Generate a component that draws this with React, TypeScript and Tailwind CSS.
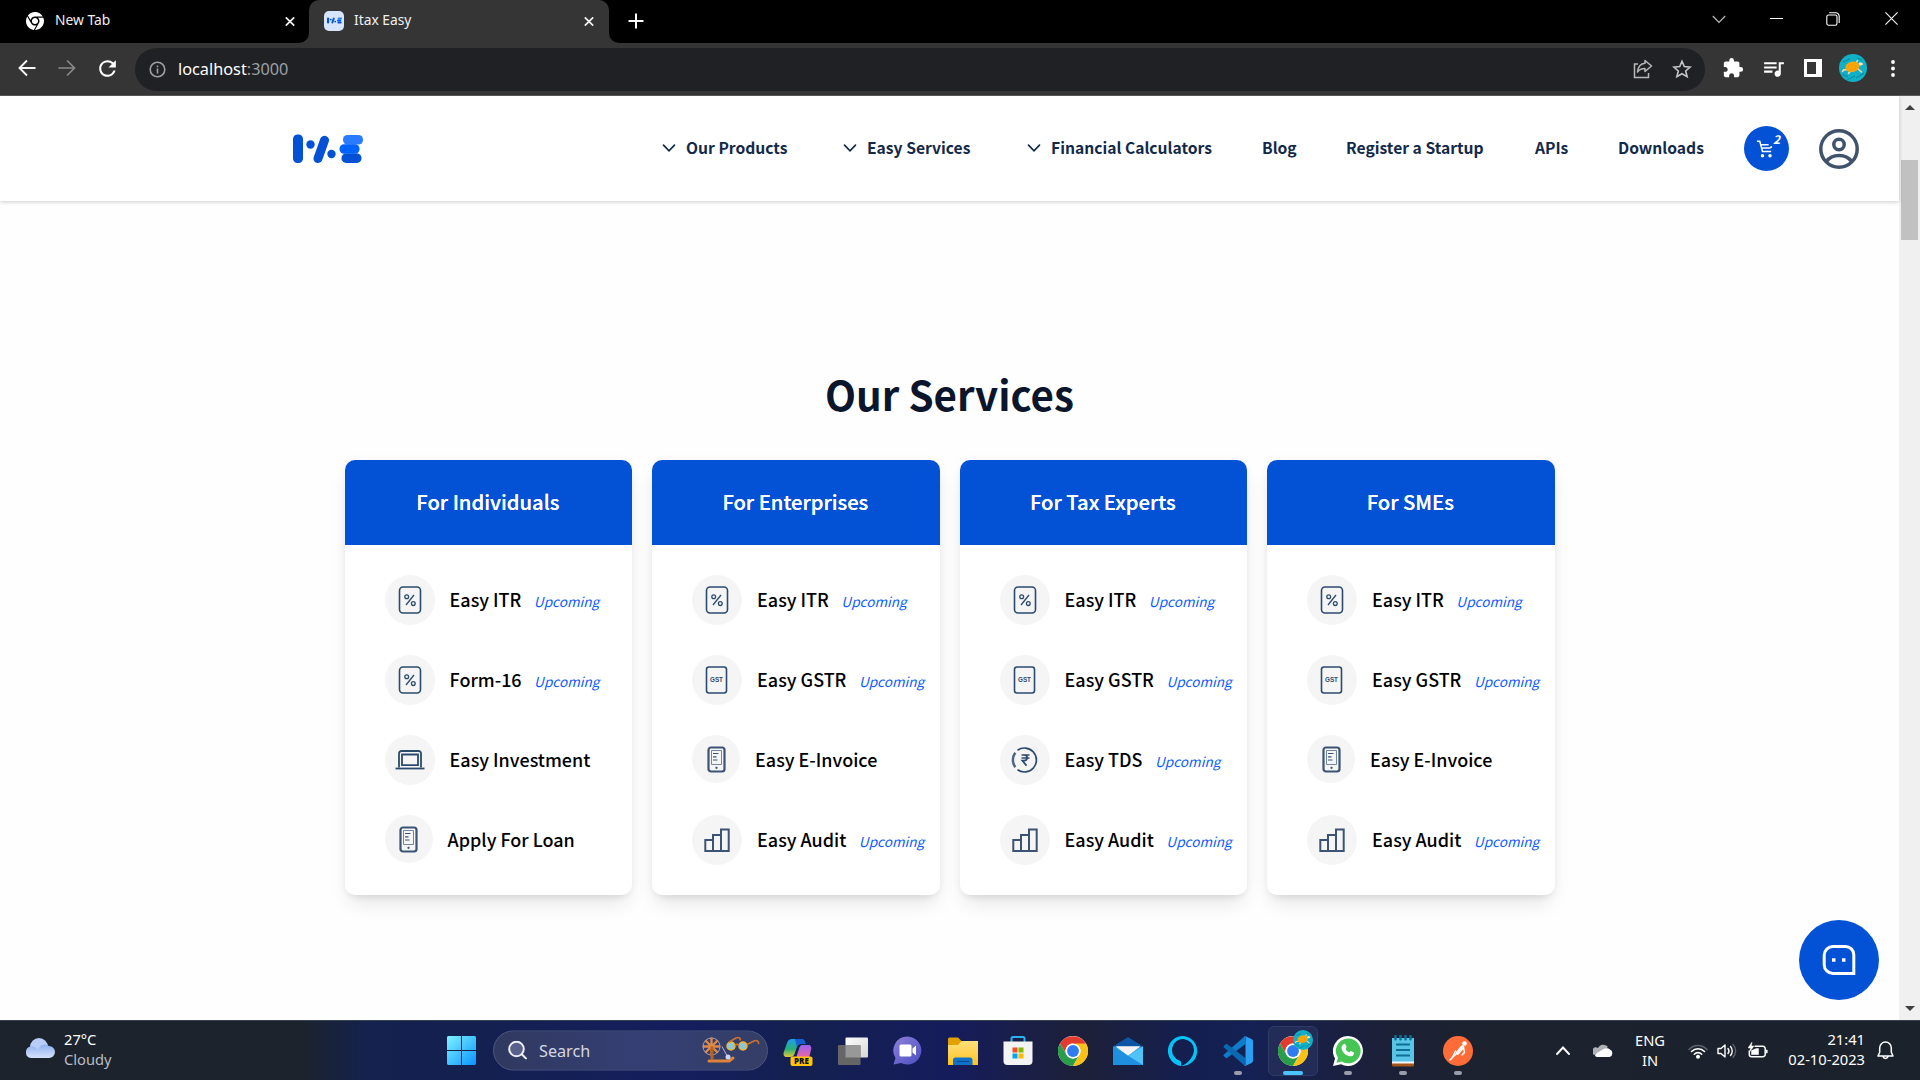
import type { ReactNode } from "react";
import { FaChrome } from "react-icons/fa6";
import { MdExtension, MdQueueMusic, MdRefresh } from "react-icons/md";

const SITE = "font-['Noto_Sans_CJK_JP','Noto_Sans_CJK_SC',sans-serif]";

function BrandMark({ className }: { className: string }) {
  return (
    <svg className={className} viewBox="0 0 70 30" fill="none">
      <rect x="0" y="0.5" width="10" height="28.5" rx="4.5" fill="#0352d6" />
      <circle cx="17.5" cy="10.5" r="4.2" fill="#0352d6" />
      <path d="M31.5 6.2 25 24.5" stroke="#0352d6" strokeWidth="9" strokeLinecap="round" />
      <circle cx="38.5" cy="20" r="4.2" fill="#0352d6" />
      <rect x="50" y="1" width="20" height="9.5" rx="4.5" fill="#2a7bff" />
      <rect x="46.500" y="10.200" width="20" height="9.500" rx="4.500" fill="#0062ff" />
      <rect x="48.500" y="19.400" width="20" height="9.500" rx="4.500" fill="#0352d6" />
    </svg>
  );
}

function CloseGlyph({ className }: { className: string }) {
  return (
    <svg className={className} viewBox="0 0 10 10" stroke="#f1f1f1" strokeWidth="1.7">
      <path d="M.8.8l8.400 8.400M9.200.8.8 9.200" />
    </svg>
  );
}

function TurtleAvatar({ className }: { className: string }) {
  return (
    <svg className={className} viewBox="0 0 28 28">
      <circle cx="14" cy="14" r="14" fill="#12b0c6" />
      <path d="M4 8l7-3M17 24l8-5M3 20l6 3M18 4l5 2M8 26l8-4" stroke="#0b8ea6" strokeWidth="1.300" />
      <path d="M17 9.500l1.500-3M9 15.500 4.500 16l-1 1.500M11 17.500l-1.500 2M18.500 14.500l4 3.500M19 10.500l4.500-.500" stroke="#f3dcb4" strokeWidth="1.500" strokeLinecap="round" fill="none" />
      <ellipse cx="13.500" cy="12.800" rx="7.200" ry="5.200" fill="#f9a60c" transform="rotate(-12 13.500 13)" />
      <path d="M9 12.500l4-2 4 1.500-1 3.500-5 .5z" stroke="#e99400" strokeWidth=".6" fill="none" />
      <circle cx="21.500" cy="10" r="1.700" fill="#fbe9cf" />
    </svg>
  );
}

function ChromeLogo({ className }: { className: string }) {
  return (
    <svg className={className} viewBox="0 0 48 48">
      <circle cx="24" cy="24" r="24" fill="#fff" />
      <path d="M24 13h20.800A24 24 0 0 0 3.200 12l10.400 18A12 12 0 0 1 24 12z" fill="#e33b2e" />
      <path d="M3.200 12A24 24 0 0 0 24 48l10.400-18A12 12 0 0 1 13.600 30z" fill="#2a9d4a" />
      <path d="M24 48A24 24 0 0 0 44.800 12H24a12 12 0 0 1 10.400 18z" fill="#fbc116" />
      <circle cx="24" cy="24" r="12" fill="#fff" />
      <circle cx="24" cy="24" r="9.500" fill="#2f7cf0" />
    </svg>
  );
}

function TabStrip() {
  return (
    <div className="flex h-[43px] bg-black text-[13.8px] text-[#f0f0f0]">
      <div className="flex w-[309px] items-center pb-[2px] pl-[26px]">
        <FaChrome className="size-[18px] text-white" />
        <span className="ml-[11px] grow">New Tab</span>
        <CloseGlyph className="mr-[14px] size-[10px] translate-y-[0.5px]" />
      </div>
      <div className="relative flex w-[300px] items-center rounded-t-[10px] bg-[#353535] pb-[2px] pl-[15px]">
        <svg className="absolute bottom-0 -left-[10px] size-[10px]" viewBox="0 0 10 10" fill="#353535"><path d="M10 0v10H0A10 10 0 0 0 10 0z" /></svg>
        <svg className="absolute -right-[10px] bottom-0 size-[10px]" viewBox="0 0 10 10" fill="#353535"><path d="M0 0v10h10A10 10 0 0 1 0 0z" /></svg>
        <div className="flex size-5 items-center justify-center rounded-[5px] bg-[#d7e5fc]">
          <BrandMark className="h-[7px] w-[15px]" />
        </div>
        <span className="ml-[10px] grow">Itax Easy</span>
        <CloseGlyph className="mr-[15px] size-[10px] translate-y-[0.5px]" />
      </div>
      <div className="flex w-[54px] items-center justify-center pb-px">
        <svg className="size-[16px]" viewBox="0 0 16 16" stroke="#fff" strokeWidth="2"><path d="M8 .5v15M.5 8h15" /></svg>
      </div>
      <div className="ml-auto flex h-[37px] items-center">
        <div className="flex w-[57px] justify-center">
          <svg className="size-[14px]" viewBox="0 0 14 14" stroke="#bbb" strokeWidth="1.200" fill="none"><path d="M.8 4l6.200 6.500L13.200 4" /></svg>
        </div>
        <div className="flex w-[57px] justify-center pl-px"><div className="h-px w-[13px] bg-white" /></div>
        <div className="flex w-[58px] justify-center">
          <svg className="size-[14px]" viewBox="0 0 14 14" stroke="#fff" strokeWidth="1.100" fill="none"><rect x=".8" y="3" width="10.200" height="10.200" rx="1.800" /><path d="M3.200.8h6.500a3.500 3.500 0 0 1 3.500 3.500v6.700" /></svg>
        </div>
        <div className="flex w-[58px] justify-center">
          <svg className="size-[13px]" viewBox="0 0 13 13" stroke="#eee" strokeWidth="1.200"><path d="M.4.4l12.200 12.200M12.600.4.4 12.600" /></svg>
        </div>
      </div>
    </div>
  );
}

function ToolCell({ children }: { children: ReactNode }) {
  return <div className="flex w-10 shrink-0 items-center justify-center">{children}</div>;
}

function Toolbar() {
  return (
    <div className="flex h-[53px] items-center border-b border-[#5a5a5a] bg-[#353535] pl-[7px]">
      <ToolCell>
        <svg className="size-[18px] -translate-y-px" viewBox="0 0 18 18" stroke="#f4f4f4" strokeWidth="1.900" fill="none"><path d="M17.500 9H1.800M9 1.500 1.500 9 9 16.500" /></svg>
      </ToolCell>
      <ToolCell>
        <svg className="size-[18px] -translate-y-px" viewBox="0 0 18 18" stroke="#8a8a8a" strokeWidth="1.700" fill="none"><path d="M.5 9h15.700M9 1.500 16.500 9 9 16.500" /></svg>
      </ToolCell>
      <ToolCell><MdRefresh className="size-[25px] -translate-y-px text-white" /></ToolCell>
      <div className="ml-[8px] flex h-[43px] w-[1570px] items-center rounded-full bg-[#202124] pl-[14px]">
        <svg className="size-[17px]" viewBox="0 0 17 17" fill="none" stroke="#9aa0a6" strokeWidth="1.600"><circle cx="8.500" cy="8.500" r="7.300" /><path d="M8.500 7.500v5M8.500 4.500v1.700" /></svg>
        <span className="ml-[12px] text-[16.3px] text-[#9aa0a6]"><span className="text-white">localhost</span>:3000</span>
        <svg className="ml-auto size-[20px]" viewBox="0 0 20 20" fill="none" stroke="#b8b8b8" strokeWidth="1.500"><path d="M5 5H1.500v13.500h14V14" /><path d="M12 1.500 18.500 7 12 12.500V9.500c-3.500 0-5.800 1-7.500 3.500C5 8 8 4.700 12 4.300z" strokeLinejoin="round" /></svg>
        <svg className="mr-[13px] ml-[19px] size-[20px]" viewBox="0 0 20 20" fill="none" stroke="#c4c4c4" strokeWidth="1.600"><path d="M10 2.200l2.300 5.400 5.900.5-4.500 3.900 1.400 5.700-5.100-3-5.100 3 1.400-5.700L1.800 8.100l5.900-.5z" /></svg>
      </div>
      <div className="ml-[8px] flex -translate-y-px">
        <ToolCell><MdExtension className="size-[22px] text-white" /></ToolCell>
        <ToolCell><MdQueueMusic className="size-[25px] text-white" /></ToolCell>
        <ToolCell>
          <svg className="size-[18px]" viewBox="0 0 18 18"><path fillRule="evenodd" d="M0 0h18v18H0zM3 3v12h9V3z" fill="#fff" /></svg>
        </ToolCell>
        <ToolCell><TurtleAvatar className="size-[28px]" /></ToolCell>
        <ToolCell>
          <svg className="h-[17px] w-[4px]" viewBox="0 0 4 17" fill="#fff"><circle cx="2" cy="2" r="1.900" /><circle cx="2" cy="8.500" r="1.900" /><circle cx="2" cy="15" r="1.900" /></svg>
        </ToolCell>
      </div>
    </div>
  );
}

function Chevron() {
  return (
    <svg className="mr-[10px] size-[14px] shrink-0" viewBox="0 0 14 14" fill="none" stroke="#12294a" strokeWidth="1.700" strokeLinecap="round"><path d="M1.500 4.200 7 9.900l5.500-5.700" /></svg>
  );
}

const NAV = [
  { label: "Our Products", menu: true, box: "w-[181px]" },
  { label: "Easy Services", menu: true, box: "w-[184px]" },
  { label: "Financial Calculators", menu: true, box: "w-[235px]" },
  { label: "Blog", menu: false, box: "w-[84px]" },
  { label: "Register a Startup", menu: false, box: "w-[189px]" },
  { label: "APIs", menu: false, box: "w-[83px]" },
  { label: "Downloads", menu: false, box: "w-[126px]" },
];

function SiteHeader() {
  return (
    <header className="flex h-[105px] shrink-0 items-center bg-white pl-[293px] shadow-[0_1px_4px_rgba(0,0,0,0.2)]">
      <BrandMark className="h-[30px] w-[70px]" />
      <nav className="ml-[299px] flex text-[15.65px] font-bold text-[#12294a]">
        {NAV.map((n) => (
          <div key={n.label} className={`flex shrink-0 items-center whitespace-nowrap ${n.box}`}>
            {n.menu && <Chevron />}
            <span className="-translate-y-px">{n.label}</span>
          </div>
        ))}
      </nav>
      <div className="relative flex size-[45px] shrink-0 items-center justify-center rounded-full bg-[#0352d6] pr-[3px]">
        <svg className="size-[18px]" viewBox="0 0 18 18" fill="none" stroke="#fff" strokeWidth="1.500"><path d="M1 1.300h2.800l2.700 10.200h8.700M4.600 4.400l8 .3M5.800 7.900h8.500M14.300 7.900l1.500-1.500" /><circle cx="6.500" cy="15.800" r="1" fill="#fff" /><circle cx="14" cy="15.800" r="1" fill="#fff" /></svg>
        <span className="absolute top-[4px] right-[9px] text-[12px] leading-[18px] font-bold text-white italic">2</span>
      </div>
      <svg className="ml-[30px] size-[40px] shrink-0" viewBox="0 0 40 40" fill="none" stroke="#40536c" strokeWidth="3.500"><circle cx="20" cy="20" r="18.200" /><circle cx="20" cy="15.500" r="5.200" /><path d="M7.500 32.500c3-4.500 7.500-6 12.500-6s9.500 1.500 12.500 6" /></svg>
    </header>
  );
}

type IconName = "percent" | "gst" | "laptop" | "phone" | "rupee" | "bars";

function ServiceIcon({ name }: { name: IconName }) {
  const ink = "#2c4a6e";
  if (name === "phone")
    return (
      <svg className="h-[27px] w-[19px]" viewBox="0 0 19 27" fill="none" stroke="#3c5375">
        <rect x="1.500" y="1.500" width="16" height="24" rx="2.500" strokeWidth="2.200" />
        <path d="M4.500 4.500h10v14h-10z" strokeWidth="1" stroke="#7485a0" />
        <path d="M6 7.500h5.500M6 10.800h3.500M6 14h4.500" strokeWidth="1.200" />
        <circle cx="9.500" cy="21.800" r=".9" fill={ink} strokeWidth=".5" />
      </svg>
    );
  if (name === "laptop")
    return (
      <svg className="h-[20px] w-[30px]" viewBox="0 0 30 20" fill="none" stroke={ink} strokeWidth="1.800">
        <path d="M4 17.500V3.500A2.500 2.500 0 0 1 6.500 1h17A2.500 2.500 0 0 1 26 3.500v14" />
        <path d="M7 4.500h16v10.700H7z" />
        <path d="M.5 18.500h29" />
      </svg>
    );
  if (name === "bars")
    return (
      <svg className="h-[26px] w-[26px]" viewBox="0 0 26 26" fill="none" stroke="#3c5375" strokeWidth="2">
        <path d="M1.300 24V13H9v11zM9 24V8h8v16zM17 24V2.500h7.700V24z" />
      </svg>
    );
  if (name === "rupee")
    return (
      <svg className="size-[28px]" viewBox="0 0 28 28" fill="none" stroke={ink} strokeWidth="1.700">
        <path d="M6.500 4.200A12 12 0 1 1 6.500 23.800" />
        <path d="M4.300 6.800A12 12 0 0 0 4.300 21.200" strokeWidth="2.500" stroke="#4d6584" />
        <path d="M10.500 9h8M10.500 12h8M11 9h2c4.200 0 4.200 5.600 0 5.600h-1.700l4.200 5" />
      </svg>
    );
  return (
    <svg className="h-[28px] w-[24px]" viewBox="0 0 24 28" fill="none" stroke={ink} strokeWidth="1.600">
      {name === "gst" ? (
        <>
          <rect x="1.500" y="1" width="20" height="26" rx="2.500" />
          <text x="11.500" y="16.300" textAnchor="middle" fontSize="6.300" fontWeight="700" fontFamily="Liberation Sans, sans-serif" fill={ink} stroke="none">GST</text>
        </>
      ) : (
        <>
          <rect x="1.500" y="1" width="21" height="26" rx="3.500" />
          <g strokeWidth="1.300"><circle cx="8.700" cy="10.800" r="1.900" /><circle cx="15.300" cy="17.600" r="1.900" /><path d="M16 9 8 19" /></g>
        </>
      )}
    </svg>
  );
}

const CARDS: { title: string; rows: [IconName, string, boolean][] }[] = [
  { title: "For Individuals", rows: [["percent", "Easy ITR", true], ["percent", "Form-16", true], ["laptop", "Easy Investment", false], ["phone", "Apply For Loan", false]] },
  { title: "For Enterprises", rows: [["percent", "Easy ITR", true], ["gst", "Easy GSTR", true], ["phone", "Easy E-Invoice", false], ["bars", "Easy Audit", true]] },
  { title: "For Tax Experts", rows: [["percent", "Easy ITR", true], ["gst", "Easy GSTR", true], ["rupee", "Easy TDS", true], ["bars", "Easy Audit", true]] },
  { title: "For SMEs", rows: [["percent", "Easy ITR", true], ["gst", "Easy GSTR", true], ["phone", "Easy E-Invoice", false], ["bars", "Easy Audit", true]] },
];

function Services() {
  return (
    <main className="flex flex-col">
      <h2 className="mt-[163px] text-center text-[40.300px] leading-[60px] font-bold text-[#0b152b]">Our Services</h2>
      <div className="mt-[36px] grid grid-cols-4 gap-5 pr-[344.400px] pl-[344.600px]">
        {CARDS.map((card) => (
          <section key={card.title} className="overflow-hidden rounded-[10px] bg-white shadow-[0_12px_19px_-4px_rgba(0,0,0,0.1),0_5px_8px_-5px_rgba(0,0,0,0.1),0_0_12px_rgba(0,0,0,0.03)]">
            <h3 className="flex h-[85px] items-center justify-center bg-[#0352d6] text-[20.200px] font-medium text-white">
              <span className="-translate-x-[0.500px] [text-shadow:0_0_0.500px_#fff]">{card.title}</span>
            </h3>
            <ul className="flex flex-col gap-[30px] py-[30px] pl-10">
              {card.rows.map(([icon, label, soon]) => (
                <li key={label} className="flex h-[50px] items-center whitespace-nowrap">
                  <div className={`flex shrink-0 items-center justify-center rounded-full bg-[#f5f5f5] ${icon === "phone" ? "size-12 self-start" : "size-[50px]"}`}>
                    <ServiceIcon name={icon} />
                  </div>
                  <span className="ml-[15px] -translate-y-px text-[17.950px] font-medium text-black">{label}</span>
                  {soon && <span className="ml-[12.500px] translate-y-px text-[13.600px] text-[#0b5cff] italic">Upcoming</span>}
                </li>
              ))}
            </ul>
          </section>
        ))}
      </div>
    </main>
  );
}

function Scrollbar() {
  return (
    <div className="flex w-[21px] shrink-0 flex-col items-center bg-[#f0f0f0]">
      <svg className="mt-[9px] h-[5px] w-[10px]" viewBox="0 0 10 5" fill="#404040"><path d="M5 0l5 5H0z" /></svg>
      <div className="mt-[50px] h-20 w-[17px] bg-[#c1c1c1]" />
      <svg className="mt-auto mb-[9px] h-[5px] w-[10px]" viewBox="0 0 10 5" fill="#404040"><path d="M5 5l5-5H0z" /></svg>
    </div>
  );
}

function AppCell({ children, state }: { children: ReactNode; state?: "open" | "active" }) {
  return (
    <div className="flex w-[55px] shrink-0 justify-center">
      <div className={`relative flex h-[50px] w-[50px] items-center justify-center rounded-[6px] ${state === "active" ? "border border-[#2e3c68] bg-[#222c57]" : ""}`}>
        {children}
        {state === "open" && <div className="absolute bottom-[1px] h-[4px] w-[8px] rounded-full bg-[#9a9caa]" />}
        {state === "active" && <div className="absolute bottom-0 h-[4px] w-[20px] rounded-full bg-[#4cc2ff]" />}
      </div>
    </div>
  );
}

function Taskbar() {
  return (
    <footer className="flex h-[60px] items-center border-t border-[#37424f] bg-[linear-gradient(90deg,#1c232d_0,#1c232d_300px,#14224f_370px,#142050_480px,#151e5e_690px,#14204f_800px,#151c5c_950px,#1d2038_1080px,#141f50_1190px,#152054_1250px,#1c2038_1380px,#1c222e_1480px,#1c222c_100%)] text-[14.700px] leading-[20px] text-white">
      <div className="flex w-[434px] shrink-0 items-center pl-[25px]">
        <svg className="h-[20px] w-[30px] -translate-y-[3px]" viewBox="0 0 30 20">
          <defs><linearGradient id="cl" x1="0" y1="0" x2="0" y2="1"><stop offset="0" stopColor="#8fb0f0" /><stop offset="1" stopColor="#d5e2fb" /></linearGradient></defs>
          <circle cx="14" cy="9" r="9" fill="#b9cdf6" />
          <path d="M6 8.500a7 7 0 0 1 7 3.500A7 7 0 0 1 24 8a6 6 0 0 1 0 12H6A5.800 5.800 0 0 1 6 8.500z" fill="url(#cl)" />
        </svg>
        <div className="ml-[9px] -translate-y-[2px]">
          <div>27°C</div>
          <div className="text-[#b9bdc3]">Cloudy</div>
        </div>
      </div>
      <AppCell>
        <svg className="size-[29px]" viewBox="0 0 29 29">
          <defs><linearGradient id="win" x1="0" y1="0" x2="1" y2="1"><stop offset="0" stopColor="#7df3ff" /><stop offset="1" stopColor="#0a93ff" /></linearGradient></defs>
          <path d="M1 0h13v14H0V1zM15 0h13l1 1v13H15zM0 15h14v14H1l-1-1zM15 15h14v13l-1 1H15z" fill="url(#win)" />
        </svg>
      </AppCell>
      <div className="mr-[2px] ml-[4px] flex h-10 w-[275px] shrink-0 -translate-y-[0.500px] items-center rounded-full border border-[#4d577f] bg-[linear-gradient(90deg,#30395f,#353f74_55%,#343e66)] pl-[14px]">
        <svg className="size-[19px]" viewBox="0 0 19 19" fill="#59618a" stroke="#eceef5" strokeWidth="2"><circle cx="8.500" cy="8.500" r="7.300" /><path d="M13.800 13.800 18 18" strokeLinecap="round" /></svg>
        <span className="ml-[12px] text-[16.200px] text-[#d4d7e2]">Search</span>
        <svg className="mr-[7px] ml-auto h-[28px] w-[58px]" viewBox="0 0 58 28" fill="none">
          <path d="M20 10l6 11" stroke="#b9b6dd" strokeWidth="1" />
          <circle cx="9.500" cy="10" r="8.500" stroke="#a9a0b8" strokeWidth="1" />
          <path d="M9.500 1v18M.8 10h17.500M3.200 3.700l12.600 12.600M15.800 3.700 3.200 16.300" stroke="#e08a4a" strokeWidth="2.300" />
          <path d="M10 10v13" stroke="#b8601f" strokeWidth="3" />
          <path d="M7 24.500h20l4-3" stroke="#e08338" strokeWidth="3" strokeLinecap="round" />
          <circle cx="26" cy="20.500" r="2.500" fill="#c9d6f5" />
          <circle cx="29" cy="9.500" r="4" fill="#8cc7d8" stroke="#f3b52a" strokeWidth="1.500" />
          <circle cx="41" cy="9.500" r="4" fill="#8cc7d8" stroke="#f3b52a" strokeWidth="1.500" />
          <path d="M33 9c1-1.500 3-1.500 4 0M27 5.500l7-4c3-1.500 5 .5 4 2.500M45 8l7-3.500c3-1.300 5 .5 4.500 3" stroke="#d0702f" strokeWidth="1.600" />
        </svg>
      </div>
      <AppCell>
        <svg className="size-[30px]" viewBox="0 0 30 30">
          <defs>
            <linearGradient id="cpa" x1="0" y1="0" x2="0" y2="1"><stop offset="0" stopColor="#1f9cf0" /><stop offset=".55" stopColor="#25b07a" /><stop offset="1" stopColor="#e3c83a" /></linearGradient>
            <linearGradient id="cpb" x1="0" y1="0" x2="0" y2="1"><stop offset="0" stopColor="#9b63f0" /><stop offset="1" stopColor="#f0679a" /></linearGradient>
          </defs>
          <path d="M9 3h9c3 0 4 2 4.500 5h-5c-2 0-3 1-3.600 3l-2 6c-.8 2.500-2 4-5 4H4c-3 0-4-2-3.200-5L4 7c.9-2.700 2.300-4 5-4z" fill="url(#cpa)" />
          <path d="M12 3h6c3 0 4 2 4.500 5h-5c-2 0-3 1-3.600 3z" fill="#1a5fd0" />
          <path d="M19 9h6c3 0 3.700 2 3 5l-2 8H13l3-9c1-3 1.500-4 3-4z" fill="url(#cpb)" />
          <rect x="7.500" y="20.500" width="22" height="9.500" rx="2" fill="#ffc40d" />
          <text x="18.500" y="28.200" textAnchor="middle" fontSize="8" fontWeight="800" fontFamily="Open Sans, sans-serif" fill="#111">PRE</text>
        </svg>
      </AppCell>
      <AppCell>
        <svg className="size-[30px]" viewBox="0 0 30 30">
          <defs><linearGradient id="tv" x1="0" y1="0" x2="1" y2="1"><stop offset="0" stopColor="#fff" /><stop offset="1" stopColor="#d6d6d6" /></linearGradient></defs>
          <rect x="7.500" y="1.500" width="22.500" height="20" rx="1" fill="url(#tv)" />
          <rect x="0" y="9" width="22.500" height="20" rx="1" fill="#666" />
          <path d="M7.500 9h15v12.500h-15z" fill="#989898" />
        </svg>
      </AppCell>
      <AppCell>
        <svg className="size-[29px]" viewBox="0 0 29 29">
          <defs><linearGradient id="tm" x1="0" y1="0" x2="1" y2="1"><stop offset="0" stopColor="#8e7fd6" /><stop offset="1" stopColor="#4a4fc4" /></linearGradient></defs>
          <path d="M14.500.5A14 14 0 1 1 8 27L.5 28.500 2.500 22A14 14 0 0 1 14.500.5z" fill="url(#tm)" />
          <rect x="6.500" y="8.500" width="12" height="12" rx="1.500" fill="#fff" />
          <path d="M19.500 12.500l3.500-3v10l-3.500-3z" fill="#fff" />
        </svg>
      </AppCell>
      <AppCell>
        <svg className="h-[28px] w-[30px]" viewBox="0 0 30 28">
          <defs><linearGradient id="fo" x1="0" y1="0" x2="0" y2="1"><stop offset="0" stopColor="#ffe07a" /><stop offset="1" stopColor="#fcc225" /></linearGradient></defs>
          <path d="M0 2a1.500 1.500 0 0 1 1.500-1.500H10L13.500 4H28v6H0z" fill="#e2a100" />
          <path d="M0 8h10l3.500-4H30v24H0z" fill="url(#fo)" />
          <path d="M5 28v-5a2.500 2.500 0 0 1 2.500-2.500h14.500A2.500 2.500 0 0 1 24.500 23v5z" fill="#0f73c9" />
          <path d="M9 24.500h12" stroke="#0a4f94" strokeWidth="1.200" />
        </svg>
      </AppCell>
      <AppCell>
        <svg className="h-[31px] w-[30px]" viewBox="0 0 30 31">
          <path d="M8.500 7V3.500A1.500 1.500 0 0 1 10 2h10a1.500 1.500 0 0 1 1.500 1.500V7" fill="none" stroke="#29b3ee" strokeWidth="2" />
          <path d="M.5 6.500h29V26a4 4 0 0 1-4 4h-21a4 4 0 0 1-4-4z" fill="#f3f3f3" />
          <path d="M9.500 12.500h5v5h-5z" fill="#f25022" /><path d="M15.500 12.500h5v5h-5z" fill="#7fba00" /><path d="M9.500 18.500h5v5h-5z" fill="#00a4ef" /><path d="M15.500 18.500h5v5h-5z" fill="#ffb900" />
        </svg>
      </AppCell>
      <AppCell><ChromeLogo className="size-[30px]" /></AppCell>
      <AppCell>
        <svg className="h-[28px] w-[30px]" viewBox="0 0 30 28">
          <path d="M0 9.500 15 0l15 9.500z" fill="#0a55a5" />
          <path d="M0 9.500h30V28H0z" fill="#2ea3ea" />
          <path d="M3 9.500h24L15 18.500z" fill="#f3f3f3" />
          <path d="M0 9.500 30 28H0z" fill="#1f8fe0" />
          <path d="M3 9.500h24L15 18.500z" fill="#f3f3f3" />
          <path d="M30 9.500 15 18.500 30 28z" fill="#4fc3f7" />
        </svg>
      </AppCell>
      <AppCell>
        <svg className="size-[30px]" viewBox="0 0 30 30"><path fillRule="evenodd" d="M15 0a15 15 0 0 0-1.800 29.900V27c0-1.200-.6-2-1.700-2.500A11 11 0 1 1 26 14.200C25.500 21 20 27.500 13.200 30A15 15 0 0 0 15 0z" fill="#05c3f7" /></svg>
      </AppCell>
      <AppCell state="open">
        <svg className="size-[30px]" viewBox="0 0 30 30">
          <path d="M22 0 1 18.500a1.200 1.200 0 0 0 0 1.800l1.700 1.500c.5.400 1.100.4 1.600 0L22.500 8z" fill="#0f7cc9" />
          <path d="M22 30 1 11.500a1.200 1.200 0 0 1 0-1.800l1.700-1.500c.5-.4 1.100-.4 1.600 0L22.500 22z" fill="#0b69b4" />
          <path d="M22 0l6.500 3c.9.500 1.500 1.200 1.500 2.200v19.600c0 1-.6 1.700-1.500 2.200L22 30c-.5 0-.8-.1-1.200-.5.7.5 1.700.1 1.700-.9V1.400c0-1-1-1.400-1.700-.9.400-.4.700-.5 1.200-.5z" fill="#2ba0f3" />
        </svg>
      </AppCell>
      <AppCell state="active">
        <ChromeLogo className="size-[30px]" />
        <TurtleAvatar className="absolute top-[3px] right-[4px] size-[20px]" />
      </AppCell>
      <AppCell state="open">
        <div className="relative flex size-[30px] items-center justify-center">
          <svg className="absolute size-[30px]" viewBox="0 0 30 30"><path d="M15 0a15 15 0 1 1-7 28.300L0 30l2-7.500A15 15 0 0 1 15 0z" fill="#fff" /><path d="M15.200 2.500a12.400 12.400 0 1 1-6.400 23l-5.300 1.300 1.500-5A12.400 12.400 0 0 1 15.200 2.500z" fill="#45c554" /></svg>
          <svg className="relative size-[15px]" viewBox="0 0 15 15" fill="#fff"><path d="M4 1c.5-.3 1.200-.2 1.500.4l1 2.300c.2.500 0 .9-.9 2 .8 1.700 2 2.900 3.900 3.700 1-1.200 1.200-1.500 1.800-1.200l2.200 1.100c.5.300.6.600.5 1.100-.3 2-2.200 3.200-4 2.900C5.500 12.500 2.200 9 1.500 5.200 1.300 3.400 2.500 1.600 4 1z" /></svg>
        </div>
      </AppCell>
      <AppCell state="open">
        <svg className="h-[32px] w-[22px]" viewBox="0 0 22 32">
          <rect y="3" width="22" height="28.500" rx="1.500" fill="#a3551c" />
          <path d="M0 3h22v25.500H0z" fill="#f5f5f5" />
          <path d="M0 3h22v23.500H0z" fill="#58c5e6" />
          <path d="M3.500.8v3.500M8.500.8v3.500M13.500.8v3.500M18.500.8v3.500" stroke="#0e6d92" strokeWidth="2.500" strokeLinecap="round" />
          <path d="M4 9.500h14M4 15h14M4 20.500h14" stroke="#0f6f93" strokeWidth="1.900" />
        </svg>
      </AppCell>
      <AppCell state="open">
        <svg className="size-[30px]" viewBox="0 0 30 30" fill="none">
          <circle cx="15" cy="15" r="15" fill="#ff6c37" />
          <circle cx="21.500" cy="7.500" r="2.300" fill="#fff" />
          <path d="M19.500 11 14.500 17" stroke="#fff" strokeWidth="3.600" strokeLinecap="round" />
          <path d="M13 18 7 24M20.500 11.500l1 5-2.500 2.500M12.500 15 8.500 23" stroke="#fff" strokeWidth="1.400" strokeLinecap="round" />
        </svg>
      </AppCell>

      <div className="ml-[63px] flex w-[30px] justify-center">
        <svg className="h-[9px] w-[14px]" viewBox="0 0 14 9" fill="none" stroke="#fff" strokeWidth="1.900" strokeLinecap="round"><path d="M1 8l6-6.500L13 8" /></svg>
      </div>
      <div className="ml-[5px] flex w-10 justify-center">
        <svg className="h-[13px] w-[20px]" viewBox="0 0 20 13"><path d="M5 4a6 6 0 0 1 10-1l-6 5-8 3A4 4 0 0 1 5 4z" fill="#aeb1b5" /><path d="M2 11c2-3 6-4 8-5.500C12 4 15 3.500 17 5.500a4 4 0 0 1-.500 7.500H4c-1 0-2-1-2-2z" fill="#fff" /></svg>
      </div>
      <div className="ml-[2px] w-[50px] -translate-y-px text-center">
        <div>ENG</div>
        <div>IN</div>
      </div>
      <div className="ml-[9px] flex w-[28px] justify-center">
        <svg className="h-[16px] w-[20px]" viewBox="0 0 20 16" fill="none" stroke="#fff" strokeWidth="1.600" strokeLinecap="round"><path d="M1 6.500a12 12 0 0 1 18 0" stroke="#5d636c" /><path d="M3.500 8.500a9 9 0 0 1 13 0M6.300 11.200a5.200 5.200 0 0 1 7.400 0" /><circle cx="10" cy="13.800" r="1.200" fill="#fff" /></svg>
      </div>
      <div className="ml-[1px] flex w-[28px] justify-center">
        <svg className="h-[16px] w-[20px]" viewBox="0 0 20 16" fill="none" stroke="#fff" strokeWidth="1.400" strokeLinecap="round" strokeLinejoin="round"><path d="M1 5.500h3L8 2v12l-4-3.500H1zM11 5.500c1.200 1.500 1.200 3.500 0 5M13.500 3.500c2.300 2.500 2.300 6.500 0 9" /><path d="M16 1.500c3.500 3.700 3.500 9.300 0 13" stroke="#5d636c" /></svg>
      </div>
      <div className="ml-[1px] flex w-[32px] justify-center">
        <svg className="h-[16px] w-[20px] -translate-y-px" viewBox="0 0 20 16" fill="none" stroke="#fff" strokeWidth="1.500"><path d="M6.500 4.300H15a2.200 2.200 0 0 1 2.200 2.200v6A2.200 2.200 0 0 1 15 14.700H3.500a2.200 2.200 0 0 1-2.200-2.200v-4" /><path d="M3.500 12.500V8.500l5-2h2v6z" fill="#fff" strokeWidth=".5" /><path d="M18 8v3h1.300V8z" fill="#fff" strokeWidth=".5" /><path d="M4 0 0 6h2.500L1.500 10l4.500-6H3.500z" fill="#fff" strokeWidth=".4" /></svg>
      </div>
      <div className="ml-[1px] w-[90px] -translate-y-[2px] text-right">
        <div>21:41</div>
        <div>02-10-2023</div>
      </div>
      <div className="ml-[8px] flex w-[24px] justify-center">
        <svg className="h-[19px] w-[17px]" viewBox="0 0 17 19" fill="none" stroke="#fff" strokeWidth="1.500" strokeLinejoin="round"><path d="M8.500 1A5.800 5.800 0 0 0 2.700 6.800v4.500L1 15h15l-1.700-3.700V6.800A5.800 5.800 0 0 0 8.500 1zM6 15.500a2.600 2.600 0 0 0 5 0" /></svg>
      </div>
    </footer>
  );
}

export default function App() {
  return (
    <div className="flex h-[1080px] w-[1920px] flex-col overflow-hidden bg-white font-['Noto_Sans','Open_Sans',sans-serif]">
      <TabStrip />
      <Toolbar />
      <div className="flex min-h-0 grow">
        <div className={`relative flex w-[1899px] flex-col bg-[#fefefe] ${SITE}`}>
          <SiteHeader />
          <Services />
          <button className="absolute top-[824px] right-[20px] flex size-20 items-center justify-center rounded-full bg-[#0352d6]">
            <svg className="size-[34px]" viewBox="0 0 34 34" fill="none" stroke="#fff" strokeWidth="3"><path d="M11 3.500h12.500a8.300 8.300 0 0 1 8.300 8.300V30.500H11A8.800 8.800 0 0 1 2.200 21.700v-9.400A8.800 8.800 0 0 1 11 3.500z" /><path d="M10 15.200h3.500v3.500H10zM20 15.200h3.500v3.500H20z" fill="#fff" stroke="none" /></svg>
          </button>
        </div>
        <Scrollbar />
      </div>
      <Taskbar />
    </div>
  );
}
